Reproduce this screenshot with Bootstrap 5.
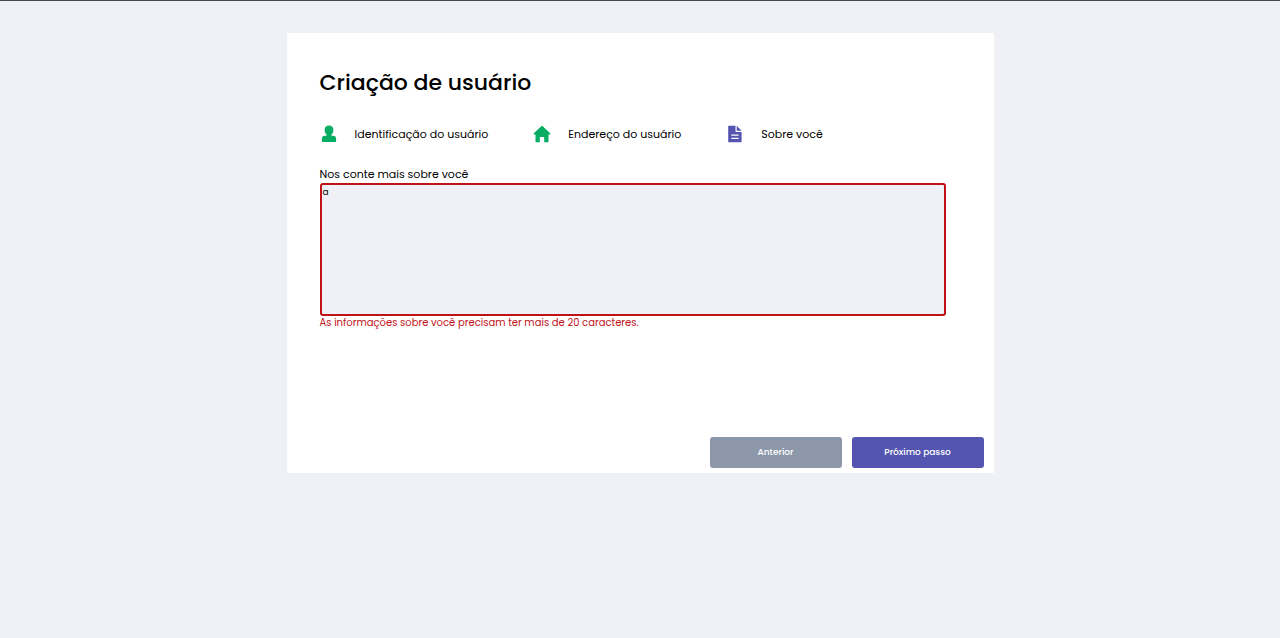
<!DOCTYPE html>
<html lang="pt-BR">
<head>
<meta charset="utf-8">
<meta name="viewport" content="width=device-width, initial-scale=1">
<title>Criação de usuário</title>
<link href="https://cdn.jsdelivr.net/npm/bootstrap@5.3.0/dist/css/bootstrap.min.css" rel="stylesheet">
<style>
  body { background: #f0f1f6; color: #000; font-family: Poppins, Inter, sans-serif; border-top: 1px solid #45454f; font-size: 11px; line-height: 18px; }
  .user-form { max-width: 707px; min-height: 440px; margin-top: 32px; background: #fff; }
  .form-content { padding: 32px 48px 0 33px; }
  .form-title { font-size: 22px; line-height: 36px; font-weight: 500; margin-bottom: 24px; }
  .steps { column-gap: 45px; row-gap: 12px; margin-bottom: 22px; }
  .step { gap: 17px; color: #000; font-weight: 400; }
  .step svg { width: 18px; height: 18px; color: #07ad62; }
  .step.current svg { color: #5355b0; }
  .about { height: 133px; padding: 0 1px; background: #f0f1f6; border: 2px solid #bf1219; border-radius: 3px; font-size: 9px; line-height: 14px; color: #000; resize: none; }
  .about:focus { background: #f0f1f6; }
  .error-text { color: #bf1219; font-size: 10px; line-height: 14px; }
  .actions { gap: 10px; padding: 0 10px 5px; }
  .step-btn { width: 132px; height: 31px; padding: 0; border: 0; border-radius: 3px; color: #fff; font-size: 9px; font-weight: 500; }
  .btn-prev { background: #8c97a9; }
  .btn-next { background: #5355b0; }
</style>
</head>
<body>
<main class="user-form container-fluid p-0 mx-auto mb-0 d-flex flex-column">
  <form class="d-flex flex-column flex-grow-1" novalidate>
    <div class="form-content">
      <h1 class="form-title">Criação de usuário</h1>
      <nav class="steps d-flex flex-wrap" aria-label="Etapas">
        <a href="#" class="step d-flex align-items-center text-decoration-none">
          <svg viewBox="0 0 18 18" fill="currentColor" aria-hidden="true"><path d="M9 .6c2.700 0 4.400 1.600 4.400 4.200 0 2.300-.8 3.800-1.900 4.800v1.200h1.700c1.800 0 2.900 1.200 2.900 3v2.500c0 .4-.3.700-.7.700H2.600c-.4 0-.7-.3-.7-.7v-2.500c0-1.800 1.100-3 2.900-3h1.700V9.600C5.400 8.600 4.600 7.100 4.600 4.800 4.600 2.200 6.300.6 9 .6z"/></svg>
          <span>Identificação do usuário</span>
        </a>
        <a href="#" class="step d-flex align-items-center text-decoration-none">
          <svg viewBox="0 0 18 18" fill="currentColor" aria-hidden="true"><path d="M8.300 1.200a1 1 0 0 1 1.400 0l7.500 7.100c.5.500.2 1.200-.4 1.200h-1.300v7c0 .4-.3.700-.7.700h-3.600v-4.600c0-.4-.2-.6-.6-.6H7.400c-.4 0-.6.200-.6.600v4.600H3.200c-.4 0-.7-.3-.7-.7v-7H1.200c-.6 0-.9-.7-.4-1.200z"/></svg>
          <span>Endereço do usuário</span>
        </a>
        <a href="#" class="step current d-flex align-items-center text-decoration-none" aria-current="step">
          <svg viewBox="0 0 18 18" fill="currentColor" aria-hidden="true"><path fill-rule="evenodd" d="M3 .8h6.500v5.400c0 .5.300.8.800.8h5.300v9.500c0 .5-.3.800-.8.800H3c-.5 0-.8-.3-.8-.8V1.600c0-.5.300-.8.800-.8zM5.300 9.400v1.300h7.300V9.400zM5.300 12.800v1.300h7.300v-1.300zM10.700.8l4.900 5h-4.900z"/></svg>
          <span>Sobre você</span>
        </a>
      </nav>
      <label for="about" class="d-block">Nos conte mais sobre você</label>
      <textarea id="about" class="about form-control" aria-describedby="about-error" aria-invalid="true">a</textarea>
      <div id="about-error" class="error-text">As informações sobre você precisam ter mais de 20 caracteres.</div>
    </div>
    <div class="actions d-flex flex-wrap justify-content-end mt-auto">
      <button type="button" class="btn step-btn btn-prev">Anterior</button>
      <button type="submit" class="btn step-btn btn-next">Próximo passo</button>
    </div>
  </form>
</main>
<script src="https://cdn.jsdelivr.net/npm/bootstrap@5.3.0/dist/js/bootstrap.bundle.min.js"></script>
</body>
</html>
